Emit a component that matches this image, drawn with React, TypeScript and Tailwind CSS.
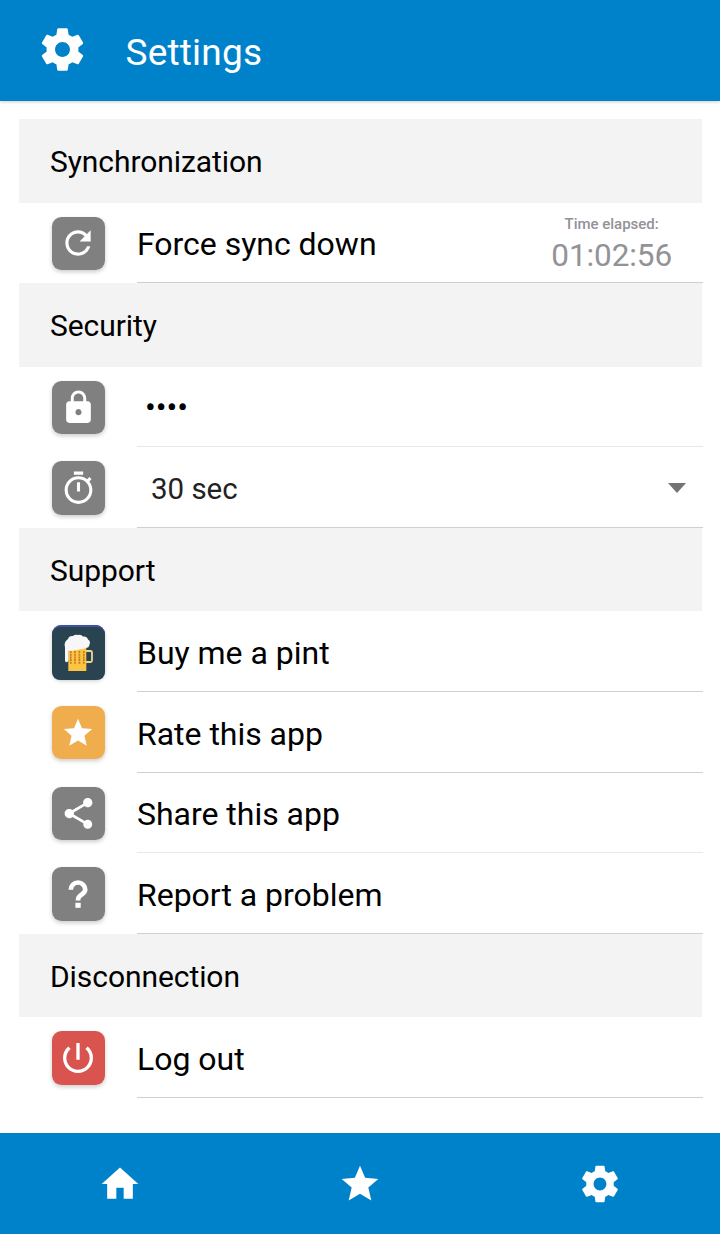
import type { ReactNode } from "react";

const paths = {
  settings:
    "M19.43 12.98c.04-.32.07-.64.07-.98s-.03-.66-.07-.98l2.11-1.65c.19-.15.24-.42.12-.64l-2-3.46c-.12-.22-.39-.3-.61-.22l-2.49 1c-.52-.4-1.08-.73-1.69-.98l-.38-2.65C14.46 2.18 14.25 2 14 2h-4c-.25 0-.46.18-.49.42l-.38 2.65c-.61.25-1.17.59-1.69.98l-2.49-1c-.23-.09-.49 0-.61.22l-2 3.46c-.13.22-.07.49.12.64l2.11 1.65c-.04.32-.07.65-.07.98s.03.66.07.98l-2.11 1.65c-.19.15-.24.42-.12.64l2 3.46c.12.22.39.3.61.22l2.49-1c.52.4 1.08.73 1.69.98l.38 2.65c.03.24.24.42.49.42h4c.25 0 .46-.18.49-.42l.38-2.65c.61-.25 1.17-.59 1.69-.98l2.49 1c.23.09.49 0 .61-.22l2-3.46c.12-.22.07-.49-.12-.64l-2.11-1.65zM12 15.5c-1.93 0-3.5-1.57-3.5-3.5s1.57-3.5 3.5-3.5 3.5 1.57 3.5 3.5-1.57 3.5-3.5 3.5z",
  refresh:
    "M17.65 6.35C16.2 4.9 14.21 4 12 4c-4.42 0-7.99 3.58-7.99 8s3.57 8 7.99 8c3.73 0 6.84-2.55 7.73-6h-2.08c-.82 2.33-3.04 4-5.65 4-3.31 0-6-2.69-6-6s2.69-6 6-6c1.66 0 3.14.69 4.22 1.78L13 11h7V4l-2.35 2.35z",
  lock: "M18 8h-1V6c0-2.76-2.24-5-5-5S7 3.24 7 6v2H6c-1.1 0-2 .9-2 2v10c0 1.1.9 2 2 2h12c1.1 0 2-.9 2-2V10c0-1.1-.9-2-2-2zm-6 9c-1.1 0-2-.9-2-2s.9-2 2-2 2 .9 2 2-.9 2-2 2zm3.1-9H8.9V6c0-1.71 1.39-3.1 3.1-3.1 1.71 0 3.1 1.39 3.1 3.1v2z",
  timer:
    "M15 1H9v2h6V1zm-4 13h2V8h-2v6zm8.03-6.61l1.42-1.42c-.43-.51-.9-.99-1.41-1.41l-1.42 1.42C16.07 4.74 14.12 4 12 4c-4.97 0-9 4.03-9 9s4.02 9 9 9 9-4.03 9-9c0-2.12-.74-4.07-1.97-5.61zM12 20c-3.87 0-7-3.13-7-7s3.13-7 7-7 7 3.13 7 7-3.13 7-7 7z",
  star: "M12 17.27L18.18 21l-1.64-7.03L22 9.24l-7.19-.61L12 2 9.19 8.63 2 9.24l5.46 4.73L5.82 21z",
  share:
    "M18 16.08c-.76 0-1.44.3-1.96.77L8.91 12.7c.05-.23.09-.46.09-.7s-.04-.47-.09-.7l7.05-4.11c.54.5 1.25.81 2.04.81 1.66 0 3-1.34 3-3s-1.34-3-3-3-3 1.34-3 3c0 .24.04.47.09.7L8.04 9.81C7.5 9.31 6.79 9 6 9c-1.66 0-3 1.34-3 3s1.34 3 3 3c.79 0 1.5-.31 2.04-.81l7.12 4.16c-.05.21-.08.43-.08.65 0 1.61 1.31 2.92 2.92 2.92s2.92-1.31 2.92-2.92-1.31-2.92-2.92-2.92z",
  power:
    "M13 3h-2v10h2V3zm4.83 2.17l-1.42 1.42C17.99 7.86 19 9.81 19 12c0 3.87-3.13 7-7 7s-7-3.13-7-7c0-2.19 1.01-4.14 2.58-5.42L6.17 5.17C4.23 6.82 3 9.26 3 12c0 4.97 4.03 9 9 9s9-4.03 9-9c0-2.74-1.23-5.18-3.17-6.83z",
  home: "M10 20v-6h4v6h5v-8h3L12 3 2 12h3v8z",
};

function Icon({ name, className }: { name: keyof typeof paths; className: string }) {
  return (
    <svg viewBox="0 0 24 24" fill="currentColor" className={`shrink-0 ${className}`}>
      <path d={paths[name]} />
    </svg>
  );
}

function HelpIcon() {
  return (
    <svg viewBox="0 0 20 28" className="h-7 w-5" fill="none">
      <path d="M2.8 9.7a7.2 7.2 0 0 1 14.4 0c0 4.6-7.1 5.2-7.1 9.5v1.300" stroke="white" strokeWidth="4.7" />
      <path d="M7.4 22.800h5.3v5H7.4z" fill="white" />
    </svg>
  );
}

function BeerIcon() {
  return (
    <svg viewBox="0 0 53 55" className="h-[55px] w-[53px] shrink-0">
      <rect width="53" height="55" rx="9" fill="#3f51a5" />
      <path d="M0 10Q1 2 9 2H44Q52 2 53 10V46Q53 55 44 55H9Q0 55 0 46Z" fill="#2a4350" />
      <path d="M33 26h5.500q1.500 0 1.500 1.500v8q0 1.500-1.500 1.500H33" fill="none" stroke="#f2d492" strokeWidth="1.8" />
      <path d="M16.300 21h18v25h-18z" fill="#fcc544" />
      <path d="M18.800 26v13M23 26v13M27.400 26v13M31.800 26v13" stroke="#c9791f" strokeWidth="1.7" strokeDasharray="2 .7" />
      <path
        d="M13 36V22q-1.500-5 3-8 1-3.500 5-3 2-2 5-1 3-1 5 1.500 4-.5 5 3 3 2 1.500 5-.5 3.500-4 3.500-2 1.500-5 1-3 1.500-6 1-3 1.500-6 .5V35q-.5 2.500-2.500 2.200z"
        fill="#f7f7f7"
      />
    </svg>
  );
}

function SectionHeader({ children }: { children: ReactNode }) {
  return (
    <h2 className="mr-[18px] ml-[19px] flex h-[83.3px] items-center bg-[#f3f3f3] pt-[2.600px] pl-[31px] text-[30px] font-normal tracking-[-0.07px]">
      {children}
    </h2>
  );
}

function Row({
  icon,
  tile = "bg-[#808080]",
  divider = "border-[#cfcfcf]",
  children,
}: {
  icon: ReactNode;
  tile?: string;
  divider?: string;
  children: ReactNode;
}) {
  return (
    <div className="flex h-[80.7px] pr-[17px] pl-[51.7px]">
      <div
        className={`mt-[13.900px] flex h-[53.500px] w-[53.500px] shrink-0 items-center justify-center rounded-[9.500px] text-white shadow-[0_2px_4px_rgba(0,0,0,0.2)] ${tile}`}
      >
        {icon}
      </div>
      <div
        className={`ml-[31.8px] flex flex-1 items-center border-b pt-[3.500px] text-[32px] tracking-[-0.02px] ${divider}`}
      >
        {children}
      </div>
    </div>
  );
}

export default function App() {
  return (
    <div className="flex h-[1234px] w-[720px] flex-col overflow-hidden bg-white font-['Roboto',sans-serif] leading-none text-black">
      <header className="flex h-[100.6px] shrink-0 items-center bg-[#0082ca] pl-[36.500px] text-white shadow-[0_1px_3px_rgba(0,0,0,0.2)]">
        <Icon name="settings" className="mb-[2px] h-[51px] w-[51px]" />
        <h1 className="ml-[38px] pt-1 text-[37px] font-normal tracking-[0.2px]">Settings</h1>
      </header>

      <main className="flex-1 pt-[18.8px]">
        <SectionHeader>Synchronization</SectionHeader>
        <Row icon={<Icon name="refresh" className="h-[38px] w-[38px]" />}>
          <span className="flex-1">Force sync down</span>
          <div className="mr-[31px] flex flex-col items-center text-[#929297]">
            <span className="text-[15px] font-medium">Time elapsed:</span>
            <span className="mt-2 text-[31.500px] tracking-[-0.1px]">01:02:56</span>
          </div>
        </Row>

        <SectionHeader>Security</SectionHeader>
        <Row divider="border-[#e8e8e8]" icon={<Icon name="lock" className="h-[37px] w-[37px]" />}>
          <span className="pb-[3px] pl-2">••••</span>
        </Row>
        <Row icon={<Icon name="timer" className="h-[37px] w-[37px]" />}>
          <span className="flex-1 pt-px pl-3.5 text-[29.500px] text-[#222]">30 sec</span>
          <svg viewBox="0 0 18 10" className="mr-[17px] mb-[2px] h-[10px] w-[18px]">
            <path d="M0 0h18L9 10z" fill="#737373" />
          </svg>
        </Row>

        <SectionHeader>Support</SectionHeader>
        <Row tile="bg-[#2a4350]" icon={<div className="pt-0.5"><BeerIcon /></div>}>
          Buy me a pint
        </Row>
        <Row tile="bg-[#f0ad4e]" icon={<Icon name="star" className="h-[34px] w-[34px]" />}>
          Rate this app
        </Row>
        <Row divider="border-[#e8e8e8]" icon={<Icon name="share" className="h-[37px] w-[37px]" />}>
          Share this app
        </Row>
        <Row icon={<HelpIcon />}>Report a problem</Row>

        <SectionHeader>Disconnection</SectionHeader>
        <Row tile="bg-[#d9534f]" icon={<Icon name="power" className="h-10 w-10" />}>
          Log out
        </Row>
      </main>

      <nav className="grid h-[101px] shrink-0 grid-cols-3 items-center justify-items-center bg-[#0082ca] text-white">
        <Icon name="home" className="h-[44px] w-[44px]" />
        <Icon name="star" className="h-[44px] w-[44px]" />
        <Icon name="settings" className="h-[44px] w-[44px]" />
      </nav>
    </div>
  );
}
